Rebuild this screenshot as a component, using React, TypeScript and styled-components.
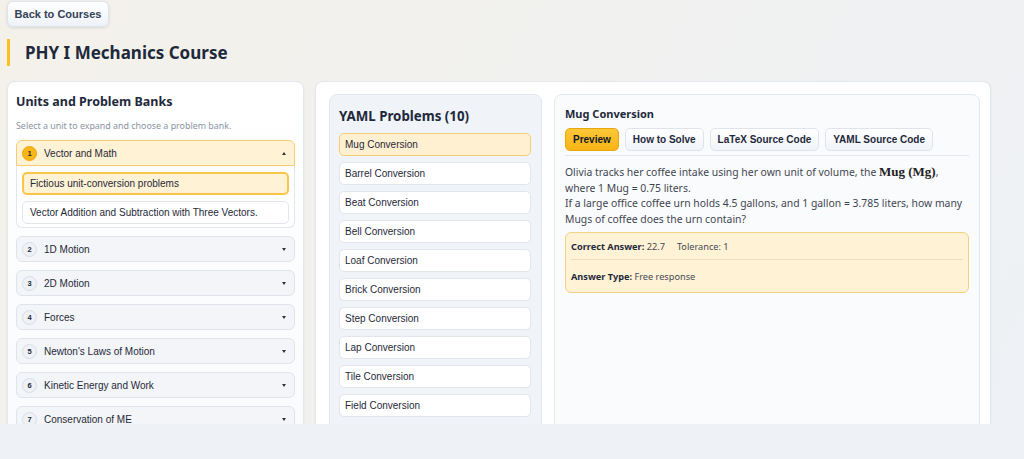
import React from "react";
import styled, { createGlobalStyle, css } from "styled-components";

const Global = createGlobalStyle`
  html, body { margin: 0; padding: 0; background: #eef1f5; }
  body { font-family: "Noto Sans", "Open Sans", sans-serif; color: #1f2937; }
  * { box-sizing: border-box; }
`;

const Page = styled.div`
  height: 424px;
  overflow: hidden;
  padding: 1px 34px 0 7px;
  background: linear-gradient(120deg, #f4f1ea 0%, #f1f1ef 45%, #eef1f5 100%);
  display: flex;
  flex-direction: column;
  & > * { flex-shrink: 0; }
`;

const BackButton = styled.button`
  align-self: flex-start;
  height: 26px;
  width: 102px;
  padding: 0;
  border: 1px solid #dde3ec;
  border-radius: 6px;
  background: linear-gradient(#ffffff, #eef2f8);
  box-shadow: 0 1px 3px rgba(30, 41, 59, 0.12);
  font-family: "Liberation Sans", Arial, sans-serif;
  font-weight: 700;
  font-size: 11px;
  color: #334155;
`;

const TitleRow = styled.div`
  margin-top: 12px;
  height: 27px;
  border-left: 3px solid #fbbf24;
  padding-left: 15px;
  display: flex;
  align-items: center;
`;

const Title = styled.h1`
  margin: 0;
  font-size: 17px;
  font-weight: 700;
  color: #1e293b;
`;

const Columns = styled.div`
  margin-top: 15px;
  display: grid;
  grid-template-columns: 297px 676px;
  gap: 11px;
  align-items: start;
`;

const Card = styled.section`
  background: #fff;
  border: 1px solid #e3e7ee;
  border-radius: 8px;
  box-shadow: 0 1px 3px rgba(15, 23, 42, 0.05);
  height: 420px;
  overflow: hidden;
`;

const LeftCard = styled(Card)`
  padding: 11px 8px;
  background: linear-gradient(#ffffff, #f9fafc);
`;

const CardHeading = styled.h2`
  margin: 0;
  font-size: 12.5px;
  font-weight: 700;
  color: #1e293b;
  line-height: 17px;
`;

const Hint = styled.p`
  margin: 10px 0 8px;
  font-size: 8.9px;
  color: #8a94a3;
  line-height: 12px;
`;

const UnitList = styled.div`
  display: flex;
  flex-direction: column;
  gap: 8px;
`;

const Unit = styled.div``;

const UnitHeader = styled.div<{ $open?: boolean }>`
  height: 26px;
  display: flex;
  align-items: center;
  padding: 0 8px 0 5px;
  border: 1px solid #dfe4ec;
  border-radius: 6px;
  background: #f3f5f9;
  font-family: "Liberation Sans", Arial, sans-serif;
  font-size: 10px;
  color: #1f2937;
  ${(p) =>
    p.$open &&
    css`
      background: #fff2d5;
      border-color: #f6cd72;
      border-radius: 6px 6px 0 0;
    `}
`;

const Badge = styled.span<{ $active?: boolean }>`
  width: 15px;
  height: 15px;
  border-radius: 50%;
  display: inline-flex;
  align-items: center;
  justify-content: center;
  font-size: 7.5px;
  font-weight: 700;
  margin-right: 7px;
  background: #eef1f6;
  border: 1px solid #d9dee6;
  color: #1f2937;
  ${(p) =>
    p.$active &&
    css`
      background: #f9b51a;
      border-color: #f0a800;
    `}
`;

const UnitName = styled.span`
  flex: 1;
`;

const Caret = styled.span<{ $up?: boolean }>`
  width: 0;
  height: 0;
  border-left: 2.5px solid transparent;
  border-right: 2.5px solid transparent;
  ${(p) =>
    p.$up
      ? css`
          border-bottom: 3px solid #333;
        `
      : css`
          border-top: 3px solid #333;
        `}
`;

const UnitBody = styled.div`
  border: 1px solid #e2e6ed;
  border-top: none;
  border-radius: 0 0 6px 6px;
  padding: 6px 5px 3px;
  display: flex;
  flex-direction: column;
  gap: 6px;
  background: #fff;
`;

const Bank = styled.div<{ $active?: boolean }>`
  height: 23px;
  display: flex;
  align-items: center;
  padding: 0 7px;
  border: 1px solid #e1e5ec;
  border-radius: 5px;
  font-family: "Liberation Sans", Arial, sans-serif;
  font-size: 10px;
  color: #1f2937;
  background: #fff;
  ${(p) =>
    p.$active &&
    css`
      background: #fff2d5;
      border: 2px solid #fbc54a;
      padding: 0 6px;
    `}
`;

const MainCard = styled(Card)`
  padding: 12px 11px 0 13px;
  display: grid;
  grid-template-columns: 213px 426px;
  gap: 12px;
  align-items: start;
`;

const ProblemPanel = styled.div`
  height: 400px;
  background: #f0f3f8;
  border: 1px solid #e1e6ee;
  border-radius: 8px;
  padding: 11px 10px 0 9px;
`;

const PanelHeading = styled.h3`
  margin: 0 0 6px;
  font-size: 13.3px;
  font-weight: 700;
  color: #1e293b;
  line-height: 21px;
`;

const ProblemList = styled.div`
  display: flex;
  flex-direction: column;
  gap: 6px;
`;

const ProblemItem = styled.div<{ $active?: boolean }>`
  height: 23px;
  display: flex;
  align-items: center;
  padding: 0 5px;
  border: 1px solid #e1e5ec;
  border-radius: 5px;
  background: #fff;
  font-family: "Liberation Sans", Arial, sans-serif;
  font-size: 10px;
  color: #1f2937;
  ${(p) =>
    p.$active &&
    css`
      background: #fff0d2;
      border-color: #f6cd72;
    `}
`;

const DetailPanel = styled.div`
  height: 400px;
  background: #fafbfd;
  border: 1px solid #e3e7ee;
  border-radius: 8px;
  padding: 11px 10px 0 10px;
`;

const DetailTitle = styled.h3`
  margin: 0;
  font-size: 11px;
  font-weight: 700;
  color: #1e293b;
  line-height: 16px;
`;

const Tabs = styled.div`
  margin-top: 6px;
  display: flex;
  gap: 6px;
  padding-bottom: 4px;
  border-bottom: 1px solid #e3e7ee;
`;

const Tab = styled.button<{ $active?: boolean }>`
  height: 23px;
  padding: 0 7px;
  border: 1px solid #dfe4ec;
  border-radius: 5px;
  background: linear-gradient(#ffffff, #f1f4f8);
  font-family: "Liberation Sans", Arial, sans-serif;
  font-weight: 700;
  font-size: 10px;
  color: #1e293b;
  ${(p) =>
    p.$active &&
    css`
      background: linear-gradient(#fcc737, #f8b416);
      border-color: #e8a70c;
      color: #111827;
    `}
`;

const Statement = styled.p`
  margin: 8px 0 0;
  font-size: 10.4px;
  line-height: 15.6px;
  color: #3f4550;
`;

const MathTerm = styled.span`
  font-family: "Liberation Serif", "Times New Roman", serif;
  font-weight: 700;
  font-size: 13px;
  color: #222;
`;

const AnswerBox = styled.div`
  margin-top: 5px;
  background: #fff2d5;
  border: 1px solid #f2d283;
  border-radius: 6px;
  padding: 0 5px;
`;

const AnswerRow = styled.div<{ $divider?: boolean }>`
  height: 27px;
  display: flex;
  align-items: center;
  gap: 12px;
  font-size: 9.2px;
  color: #444b57;
  ${(p) =>
    p.$divider &&
    css`
      border-bottom: 1px solid #eadfc4;
    `}
  & + & {
    height: 32px;
  }
`;

const Label = styled.b`
  color: #1e293b;
`;

const units = [
  "1D Motion",
  "2D Motion",
  "Forces",
  "Newton's Laws of Motion",
  "Kinetic Energy and Work",
  "Conservation of ME",
];

const problems = [
  "Mug Conversion",
  "Barrel Conversion",
  "Beat Conversion",
  "Bell Conversion",
  "Loaf Conversion",
  "Brick Conversion",
  "Step Conversion",
  "Lap Conversion",
  "Tile Conversion",
  "Field Conversion",
];

export default function App() {
  return (
    <>
      <Global />
      <Page>
        <BackButton>Back to Courses</BackButton>
        <TitleRow>
          <Title>PHY I Mechanics Course</Title>
        </TitleRow>
        <Columns>
          <LeftCard>
            <CardHeading>Units and Problem Banks</CardHeading>
            <Hint>Select a unit to expand and choose a problem bank.</Hint>
            <UnitList>
              <Unit>
                <UnitHeader $open>
                  <Badge $active>1</Badge>
                  <UnitName>Vector and Math</UnitName>
                  <Caret $up />
                </UnitHeader>
                <UnitBody>
                  <Bank $active>Fictious unit-conversion problems</Bank>
                  <Bank>Vector Addition and Subtraction with Three Vectors.</Bank>
                </UnitBody>
              </Unit>
              {units.map((u, i) => (
                <Unit key={u}>
                  <UnitHeader>
                    <Badge>{i + 2}</Badge>
                    <UnitName>{u}</UnitName>
                    <Caret />
                  </UnitHeader>
                </Unit>
              ))}
            </UnitList>
          </LeftCard>
          <MainCard>
            <ProblemPanel>
              <PanelHeading>YAML Problems (10)</PanelHeading>
              <ProblemList>
                {problems.map((p, i) => (
                  <ProblemItem key={p} $active={i === 0}>
                    {p}
                  </ProblemItem>
                ))}
              </ProblemList>
            </ProblemPanel>
            <DetailPanel>
              <DetailTitle>Mug Conversion</DetailTitle>
              <Tabs>
                <Tab $active>Preview</Tab>
                <Tab>How to Solve</Tab>
                <Tab>LaTeX Source Code</Tab>
                <Tab>YAML Source Code</Tab>
              </Tabs>
              <Statement>
                Olivia tracks her coffee intake using her own unit of volume, the{" "}
                <MathTerm>Mug (Mg)</MathTerm>,
                <br />
                where 1 Mug = 0.75 liters.
                <br />
                If a large office coffee urn holds 4.5 gallons, and 1 gallon = 3.785 liters, how many
                Mugs of coffee does the urn contain?
              </Statement>
              <AnswerBox>
                <AnswerRow $divider>
                  <span>
                    <Label>Correct Answer:</Label> 22.7
                  </span>
                  <span>Tolerance: 1</span>
                </AnswerRow>
                <AnswerRow>
                  <span>
                    <Label>Answer Type:</Label> Free response
                  </span>
                </AnswerRow>
              </AnswerBox>
            </DetailPanel>
          </MainCard>
        </Columns>
      </Page>
    </>
  );
}
